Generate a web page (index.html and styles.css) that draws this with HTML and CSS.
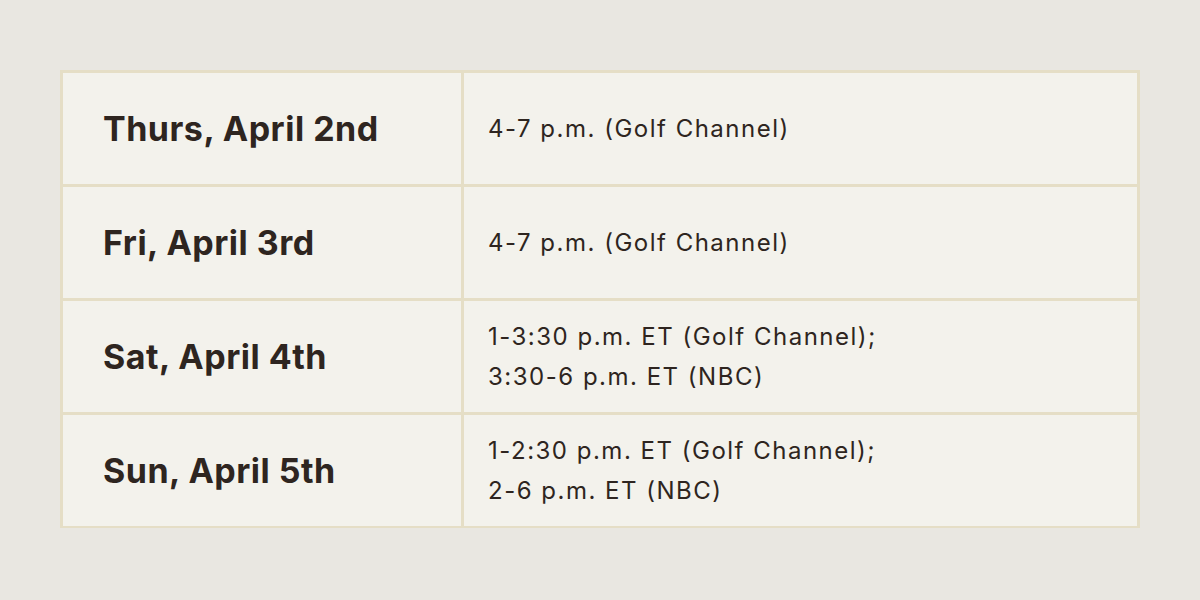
FILE: index.html
```html
<!DOCTYPE html>
<html>
<head>
<meta charset="utf-8">
<link rel="stylesheet" href="styles.css">
</head>
<body>
<div class="page">
  <div class="schedule">
    <div class="day">Thurs, April 2nd</div>
    <div class="time">4-7 p.m. (Golf Channel)</div>
    <div class="day">Fri, April 3rd</div>
    <div class="time">4-7 p.m. (Golf Channel)</div>
    <div class="day">Sat, April 4th</div>
    <div class="time">1-3:30 p.m. ET (Golf Channel);<br>3:30-6 p.m. ET (NBC)</div>
    <div class="day">Sun, April 5th</div>
    <div class="time">1-2:30 p.m. ET (Golf Channel);<br>2-6 p.m. ET (NBC)</div>
  </div>
</div>
</body>
</html>
```

FILE: styles.css
```css
html, body {
  margin: 0;
  padding: 0;
}
body {
  width: 1200px;
  height: 600px;
  background: #e9e7e1;
  overflow: hidden;
}
.page {
  padding: 70px 60px 0 60px;
}
.schedule {
  display: grid;
  grid-template-columns: 398px 1fr;
  grid-template-rows: repeat(4, 111px);
  gap: 3px;
  padding: 3px;
  background: #e5dec6;
  height: 458px;
  box-sizing: border-box;
}
.day, .time {
  background: #f3f2ec;
  display: flex;
  align-items: center;
  color: #2e2520;
}
.day {
  padding-left: 40px;
  font-family: Inter, sans-serif;
  font-weight: 700;
  font-size: 34px;
  letter-spacing: 0.5px;
}
.time {
  padding-left: 24px;
  font-family: Inter, sans-serif;
  font-weight: 400;
  font-size: 24px;
  line-height: 40px;
  letter-spacing: 1.5px;
}
```
